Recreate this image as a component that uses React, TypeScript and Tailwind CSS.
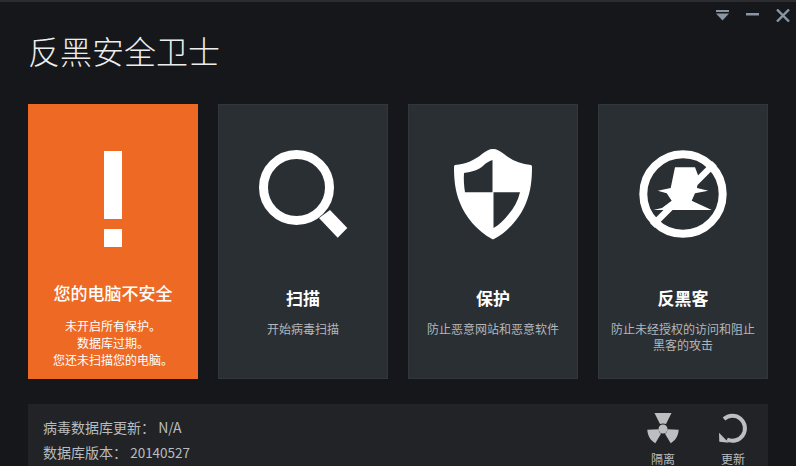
import React from "react";

const cjk = "font-['Noto_Sans_CJK_SC','Liberation_Sans',sans-serif]";

function Card({ icon, title, lines }: { icon: React.ReactNode; title: string; lines: string[] }) {
  return (
    <div className="h-[275px] bg-[#2a2f34] border border-[#32373c] flex flex-col items-center">
      <div className="h-[180px] w-full flex items-start justify-center pt-[44px]">{icon}</div>
      <div className="text-[17px] leading-[24px] font-bold text-white mt-[1px]">{title}</div>
      <div className="mt-[11px] text-[12px] leading-[16px] text-[#b4b7ba] text-center">
        {lines.map((l) => (
          <div key={l}>{l}</div>
        ))}
      </div>
    </div>
  );
}

function Search() {
  return (
    <svg width="90" height="90" viewBox="0 0 90 90">
      <circle cx="38.500" cy="38.500" r="33" fill="none" stroke="#fff" strokeWidth="9" />
      <path d="M61 69L72 61L89.300 79L79.700 88.700Z" fill="#fff" />
    </svg>
  );
}

function Shield() {
  return (
    <svg width="80" height="92" viewBox="0 0 80 92">
      <path
        d="M40 0C44 0 47 2 51 5C58 11 67 15 78 16C78.500 16 79 17 79 18C79 30 78 42 73 54C68 67 56 82 41 90C40.500 90.300 39.500 90.300 39 90C24 82 12 67 7 54C2 42 1 30 1 18C1 17 1.500 16 2 16C13 15 22 11 29 5C33 2 36 0 40 0Z"
        fill="#fff"
      />
      <path d="M39.500 11V43.300H12C11 37 10.500 30 11 24C19 23 26 21 31 16C33 14 36 12 39.500 11Z" fill="#2a2f34" />
      <path d="M40.500 43.300H67C65 52 61 59 55 66C51 71 46 76 40.500 79Z" fill="#2a2f34" />
    </svg>
  );
}

function Hacker() {
  return (
    <svg width="90" height="90" viewBox="0 0 90 90">
      <circle cx="45" cy="45" r="39.700" fill="none" stroke="#fff" strokeWidth="8" />
      <path
        d="M37 18.300H57L60.300 27L59 39L70.300 41.700L57 44.300L53.700 51.700L73.700 61H15.300L24 59L33.700 51.700L28.700 44.300L19.700 41.700L32.700 39Z"
        fill="#fff"
      />
      <path d="M14.500 76.500L76.500 14.500" stroke="#fff" strokeWidth="6.500" />
    </svg>
  );
}

function Radiation() {
  return (
    <svg width="32" height="32" viewBox="0 0 32 32">
      <path d="M7.500 1H24.500L19 12C17.500 11.300 14.500 11.300 13 12Z" fill="#bdbebf" />
      <circle cx="16" cy="17" r="4.500" fill="#bdbebf" />
      <path d="M0.300 17.800L11.700 17.200C11.700 19.500 12.500 21 14 21.700L8.300 31.300C3.500 28.500 0.700 24 0.300 17.800Z" fill="#bdbebf" />
      <path d="M31.700 17.800L20.300 17.200C20.300 19.500 19.500 21 18 21.700L23.700 31.300C28.500 28.500 31.300 24 31.700 17.800Z" fill="#bdbebf" />
    </svg>
  );
}

function Refresh() {
  return (
    <svg width="30" height="32" viewBox="0 0 30 32">
      <path d="M6 7A12.500 12.500 0 1 1 9 27.500" fill="none" stroke="#bdbebf" strokeWidth="4" />
      <path d="M1 20.800L1.300 29.700L10.800 30.700Z" fill="#bdbebf" />
    </svg>
  );
}

export default function App() {
  return (
    <div className={`${cjk} w-[796px] h-[466px] overflow-hidden bg-[#15171a] border-t-2 border-[#2b2d30]`}>
      <div className="h-[102px] relative">
        <div className="absolute right-[6px] top-[7px] flex items-start gap-[17px]">
          <svg width="13" height="11" viewBox="0 0 13 11" className="mt-[1px]">
            <rect x="0" y="0" width="13" height="2" fill="#8a96a3" />
            <path d="M0 3.500H13L6.500 10.500Z" fill="#8a96a3" />
          </svg>
          <svg width="13" height="3" viewBox="0 0 13 3" className="mt-[4px]">
            <rect width="13" height="2.500" fill="#8a96a3" />
          </svg>
          <svg width="14" height="13" viewBox="0 0 14 13">
            <path d="M1 0.500L13 12.500M13 0.500L1 12.500" stroke="#8a96a3" strokeWidth="2.400" />
          </svg>
        </div>
        <div className="pl-[28px] pt-[28px] text-[32px] leading-[40px] font-light text-[#eceded]">反黑安全卫士</div>
      </div>

      <div className="ml-[28px] w-[740px] grid grid-cols-4 gap-[20px]">
        <div className="h-[275px] bg-[#ee6923] flex flex-col items-center text-white">
          <div className="mt-[47px] w-[18px] h-[68px] bg-white" />
          <div className="mt-[10px] w-[18px] h-[18px] bg-white" />
          <div className="mt-[34px] text-[17px] leading-[24px] font-medium">您的电脑不安全</div>
          <div className="mt-[12px] text-[12px] leading-[17px] text-center">
            <div>未开启所有保护。</div>
            <div>数据库过期。</div>
            <div>您还未扫描您的电脑。</div>
          </div>
        </div>
        <Card icon={<Search />} title="扫描" lines={["开始病毒扫描"]} />
        <Card icon={<Shield />} title="保护" lines={["防止恶意网站和恶意软件"]} />
        <Card icon={<Hacker />} title="反黑客" lines={["防止未经授权的访问和阻止", "黑客的攻击"]} />
      </div>

      <div className="ml-[28px] mt-[25px] w-[740px] h-[80px] bg-[#212326] flex justify-between text-[#b9bcbf]">
        <div className="pl-[15px] pt-[11px] text-[14px] leading-[25px]">
          <div>病毒数据库更新： N/A</div>
          <div>
            数据库版本： <span className="text-[13.5px]">20140527</span>
          </div>
        </div>
        <div className="flex gap-[39px] pr-[20px] pt-[8px] text-[12px]">
          <div className="flex flex-col items-center gap-[7px] w-[32px]">
            <Radiation />
            <span className="leading-[16px]">隔离</span>
          </div>
          <div className="flex flex-col items-center gap-[7px] w-[30px]">
            <Refresh />
            <span className="leading-[16px]">更新</span>
          </div>
        </div>
      </div>
    </div>
  );
}
